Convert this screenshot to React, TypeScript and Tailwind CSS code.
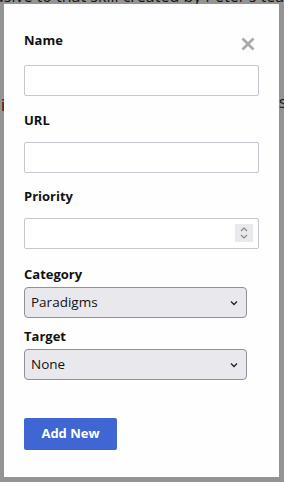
import React from "react";

const font = { fontFamily: '"Open Sans", "Noto Sans", sans-serif' };

function Label({ children, className = "" }: { children: React.ReactNode; className?: string }) {
  return (
    <div className={`h-[18px] leading-[18px] text-[13px] font-bold text-[#111] ${className}`}>{children}</div>
  );
}

function TextInput({ className = "", children }: { className?: string; children?: React.ReactNode }) {
  return (
    <div className={`relative h-[31px] w-[235px] rounded-[2px] border border-[#c6c6cf] bg-white ${className}`}>{children}</div>
  );
}

function Select({ value, className = "" }: { value: string; className?: string }) {
  return (
    <div
      className={`flex h-[31px] w-[223px] items-center justify-between rounded-[4px] border border-[#8f8f9d] bg-[#e9e9ed] pl-[6px] pr-[6px] text-[13.5px] text-[#111] ${className}`}
    >
      <span>{value}</span>
      <svg width="10" height="10" viewBox="0 0 10 10" className="mr-[1px]">
        <path d="M2 3.5 L5 6.5 L8 3.5" fill="none" stroke="#222" strokeWidth="1.3" />
      </svg>
    </div>
  );
}

export default function App() {
  return (
    <div className="relative h-[482px] w-[284px] overflow-hidden bg-[#949494]" style={font}>
      <div className="pointer-events-none absolute left-0 top-[-12px] w-[284px] text-[16px] leading-[16px] text-[#1a1208] whitespace-nowrap">
        <div className="ml-[-6px]">usive to that skill created by Peter's team a</div>
      </div>
      <div className="pointer-events-none absolute left-[1px] top-[93px] text-[16px] text-[#1a1208]">i</div>
      <div className="pointer-events-none absolute left-[279px] top-[90px] text-[16px] text-[#1a1208]">s</div>

      <div className="absolute left-[4px] top-[4px] flex h-[473px] w-[275px] flex-col bg-[#fefefe] pl-[20px] pt-[25px]">
        <div className="flex items-center justify-between pr-[24px]">
          <Label>Name</Label>
          <svg width="14" height="14" viewBox="0 0 14 14" className="mt-[8px]">
            <path d="M1.5 1.5 L12.5 12.5 M12.5 1.5 L1.5 12.5" stroke="#a9a9a9" strokeWidth="2.6" strokeLinecap="butt" />
          </svg>
        </div>
        <TextInput className="mt-[14px]" />
        <Label className="mt-[15px]">URL</Label>
        <TextInput className="mt-[13px]" />
        <Label className="mt-[14px]">Priority</Label>
        <TextInput className="mt-[13px]">
          <div className="absolute right-[5px] top-[5px] flex h-[18px] w-[18px] flex-col items-center justify-center bg-[#e9e9ed]">
            <svg width="10" height="16" viewBox="0 0 10 16">
              <path d="M2 6 L5 3 L8 6" fill="none" stroke="#888" strokeWidth="1.2" />
              <path d="M2 10 L5 13 L8 10" fill="none" stroke="#888" strokeWidth="1.2" />
            </svg>
          </div>
        </TextInput>
        <Label className="mt-[16px]">Category</Label>
        <Select value="Paradigms" className="mt-[4px]" />
        <Label className="mt-[9px]">Target</Label>
        <Select value="None" className="mt-[4px]" />
        <button className="mt-[38px] h-[32px] w-[93px] rounded-[2px] bg-[#3f66d3] text-[13px] font-bold text-white">
          Add New
        </button>
      </div>
    </div>
  );
}
